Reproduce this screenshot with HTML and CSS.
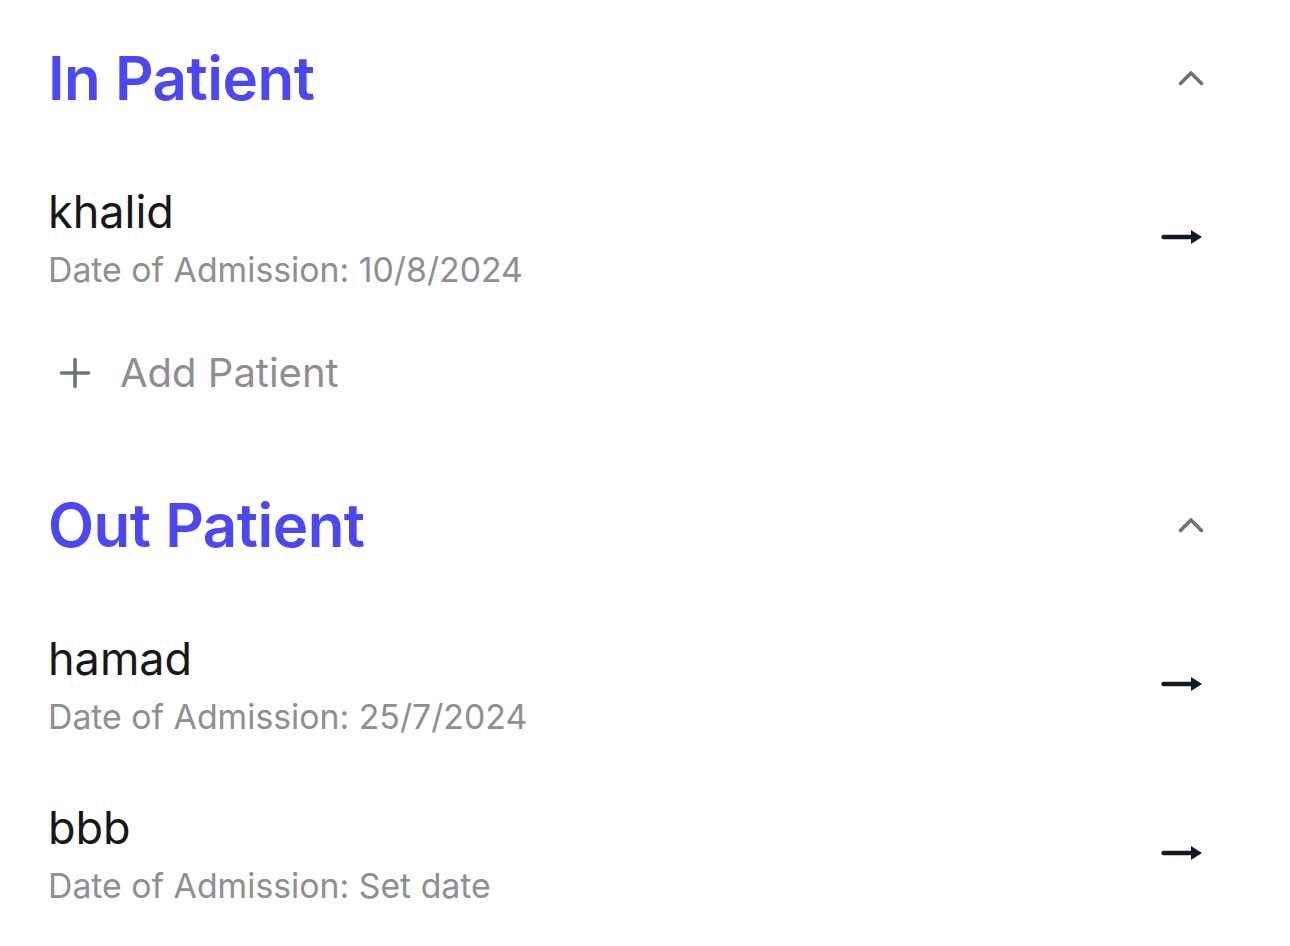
FILE: index.html
```html
<!DOCTYPE html>
<html>
<head>
<meta charset="utf-8">
<link rel="stylesheet" href="styles.css">
</head>
<body>
<main class="page">
  <section class="group">
    <header class="group-head">
      <h2 class="group-title">In Patient</h2>
      <svg class="chevron" viewBox="0 0 26 16" width="26" height="16"><path d="M2.5 13.5 L13 3 L23.5 13.5" fill="none" stroke="#6b7280" stroke-width="3.6" stroke-linecap="round" stroke-linejoin="round"/></svg>
    </header>
    <div class="item">
      <div class="item-text">
        <div class="item-name">khalid</div>
        <div class="item-date">Date of Admission: 10/8/2024</div>
      </div>
      <svg class="arrow" viewBox="0 0 42 16" width="42" height="16"><path d="M2.5 8 H32" stroke="#111827" stroke-width="4.4" stroke-linecap="round"/><path d="M30 1 L41 8 L30 15 Z" fill="#111827"/></svg>
    </div>
    <div class="add-row">
      <svg class="plus" viewBox="0 0 32 32" width="32" height="32"><path d="M16 2.5 V29.5 M2.5 16 H29.5" stroke="#6b7280" stroke-width="3.6" stroke-linecap="round"/></svg>
      <span class="add-label">Add Patient</span>
    </div>
  </section>
  <section class="group">
    <header class="group-head">
      <h2 class="group-title">Out Patient</h2>
      <svg class="chevron" viewBox="0 0 26 16" width="26" height="16"><path d="M2.5 13.5 L13 3 L23.5 13.5" fill="none" stroke="#6b7280" stroke-width="3.6" stroke-linecap="round" stroke-linejoin="round"/></svg>
    </header>
    <div class="item">
      <div class="item-text">
        <div class="item-name">hamad</div>
        <div class="item-date">Date of Admission: 25/7/2024</div>
      </div>
      <svg class="arrow" viewBox="0 0 42 16" width="42" height="16"><path d="M2.5 8 H32" stroke="#111827" stroke-width="4.4" stroke-linecap="round"/><path d="M30 1 L41 8 L30 15 Z" fill="#111827"/></svg>
    </div>
    <div class="item">
      <div class="item-text">
        <div class="item-name">bbb</div>
        <div class="item-date">Date of Admission: Set date</div>
      </div>
      <svg class="arrow" viewBox="0 0 42 16" width="42" height="16"><path d="M2.5 8 H32" stroke="#111827" stroke-width="4.4" stroke-linecap="round"/><path d="M30 1 L41 8 L30 15 Z" fill="#111827"/></svg>
    </div>
  </section>
</main>
</body>
</html>
```

FILE: styles.css
```css
html, body {
  margin: 0;
  padding: 0;
  background: #ffffff;
}
body {
  font-family: Inter, "Noto Sans", sans-serif;
  color: #111827;
}
.page {
  padding: 42px 86px 0 48px;
  display: flex;
  flex-direction: column;
  gap: 92px;
}
.group {
  display: flex;
  flex-direction: column;
}
.group-head {
  display: flex;
  align-items: center;
  justify-content: space-between;
  height: 72px;
  margin-bottom: 40px;
}
.group-title {
  margin: 0;
  font-size: 60px;
  font-weight: 600;
  letter-spacing: -0.5px;
  color: #4b47f2;
  line-height: 72px;
}
.item {
  display: flex;
  align-items: center;
  justify-content: space-between;
  padding: 31px 0;
}
.item-text {
  display: flex;
  flex-direction: column;
  gap: 9px;
}
.item-name {
  font-size: 45px;
  line-height: 54px;
  color: #16171a;
}
.item-date {
  font-size: 33.8px;
  line-height: 44px;
  color: #8e8e93;
}
.arrow {
  margin-right: 1px;
  margin-top: -4px;
}
.add-row {
  display: flex;
  align-items: center;
  gap: 29px;
  padding: 26px 0 0 11px;
}
.add-label {
  font-size: 40px;
  line-height: 48px;
  color: #8e8e93;
}
```
